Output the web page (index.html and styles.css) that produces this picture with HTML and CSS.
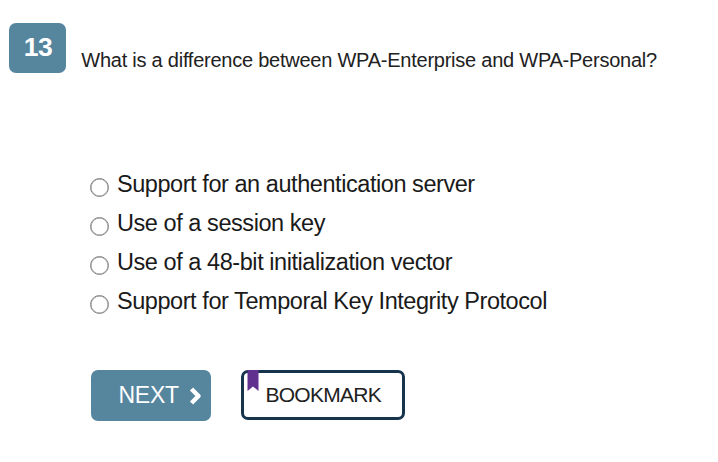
FILE: index.html
```html
<!DOCTYPE html>
<html lang="en">
<head>
<meta charset="utf-8">
<title>Question 13</title>
<link rel="stylesheet" href="styles.css">
</head>
<body>
<main class="quiz">
  <header class="question">
    <span class="number">13</span>
    <h1 class="prompt">What is a difference between WPA-Enterprise and WPA-Personal?</h1>
  </header>
  <form class="answers">
    <label class="answer"><input type="radio" name="answer"><span>Support for an authentication server</span></label>
    <label class="answer"><input type="radio" name="answer"><span>Use of a session key</span></label>
    <label class="answer"><input type="radio" name="answer"><span>Use of a 48-bit initialization vector</span></label>
    <label class="answer"><input type="radio" name="answer"><span>Support for Temporal Key Integrity Protocol</span></label>
  </form>
  <div class="actions">
    <button class="next" type="button"><span>NEXT</span><svg class="chevron" viewBox="0 0 14 20"><path d="M2.500 3 9.500 10l-7 7"/></svg></button>
    <button class="bookmark" type="button"><svg class="ribbon" viewBox="0 0 12 21"><path d="M0.500 0h11v21L6 16.500 0.500 21z"/></svg><span>BOOKMARK</span></button>
  </div>
</main>
</body>
</html>
```
FILE: styles.css
```css
body { margin: 0; background: #fff; color: #212121; font-family: "Liberation Sans", Arial, sans-serif; }
.quiz { padding: 23px 0 0 9.4px; }
.question { display: flex; height: 50px; }
.number { box-sizing: border-box; width: 57px; height: 50px; border-radius: 7px; background: #56859e; color: #fff; font-size: 26.5px; font-weight: bold; letter-spacing: -0.5px; line-height: 49px; text-align: center; }
.prompt { margin: 25px 0 0 14.9px; font-size: 20px; font-weight: normal; letter-spacing: -0.24px; line-height: 24px; white-space: nowrap; }
.answers { display: flex; flex-direction: column; margin: 92px 0 0 80.6px; }
.answer { display: flex; height: 39px; color: #1a1a1a; font-size: 23.5px; letter-spacing: -0.44px; line-height: 39px; white-space: nowrap; }
.answer input { appearance: none; box-sizing: border-box; width: 19px; height: 19px; margin: 13px 8px 0 0; border: 1.5px solid #858585; border-radius: 50%; background: #fff; box-shadow: inset 0 0 0 0.5px #858585; }
.actions { display: flex; gap: 30px; margin: 49px 0 0 82px; }
button { box-sizing: border-box; display: flex; align-items: center; padding: 0; font-family: inherit; }
.next { width: 120px; height: 51px; padding-left: 27px; border: 0; border-radius: 7px; background: #56859e; color: #fff; font-size: 23px; letter-spacing: -0.2px; }
.chevron { width: 14px; height: 20px; margin: 0 0 0 10px; fill: none; stroke: #fff; stroke-width: 4.5; stroke-linejoin: round; }
.bookmark { position: relative; width: 164px; height: 50px; padding-left: 21px; border: 3px solid #17344d; border-radius: 7px; background: #fff; color: #212121; font-size: 21px; letter-spacing: -0.7px; }
.ribbon { position: absolute; left: 3px; top: -3px; width: 12px; height: 21px; fill: #61318f; }
```
